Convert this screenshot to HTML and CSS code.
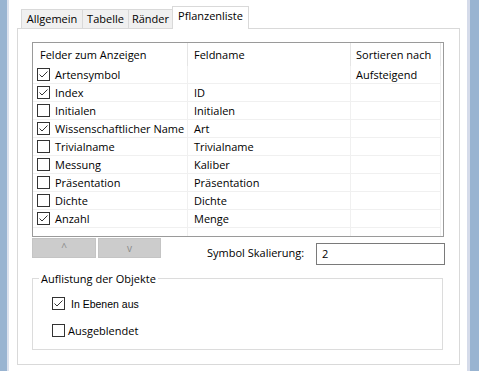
FILE: index.html
```html
<!DOCTYPE html>
<html lang="de">
<head>
<meta charset="utf-8">
<title>Pflanzenliste</title>
<link rel="stylesheet" href="styles.css">
</head>
<body>
<div class="frame">
  <div class="edge-left"></div>
  <div class="dialog">
    <div class="tabs">
      <div class="tab w1">Allgemein</div>
      <div class="tab w2">Tabelle</div>
      <div class="tab w3">Ränder</div>
      <div class="tab w4 active">Pflanzenliste</div>
    </div>
    <div class="panel">
      <div class="listview">
        <div class="lv-head">
          <div class="c1">Felder zum Anzeigen</div>
          <div class="c2">Feldname</div>
          <div class="c3">Sortieren nach</div>
        </div>
        <div class="lv-row">
          <div class="c1"><span class="cb on"><svg viewBox="0 0 11 11" width="11" height="11"><path d="M1.5 5.5 L4 8 L9.5 2.5" /></svg></span>Artensymbol</div>
          <div class="c2"></div>
          <div class="c3">Aufsteigend</div>
        </div>
        <div class="lv-row">
          <div class="c1"><span class="cb on"><svg viewBox="0 0 11 11" width="11" height="11"><path d="M1.5 5.5 L4 8 L9.5 2.5" /></svg></span>Index</div>
          <div class="c2">ID</div>
          <div class="c3"></div>
        </div>
        <div class="lv-row">
          <div class="c1"><span class="cb"></span>Initialen</div>
          <div class="c2">Initialen</div>
          <div class="c3"></div>
        </div>
        <div class="lv-row">
          <div class="c1"><span class="cb on"><svg viewBox="0 0 11 11" width="11" height="11"><path d="M1.5 5.5 L4 8 L9.5 2.5" /></svg></span>Wissenschaftlicher Name</div>
          <div class="c2">Art</div>
          <div class="c3"></div>
        </div>
        <div class="lv-row">
          <div class="c1"><span class="cb"></span>Trivialname</div>
          <div class="c2">Trivialname</div>
          <div class="c3"></div>
        </div>
        <div class="lv-row">
          <div class="c1"><span class="cb"></span>Messung</div>
          <div class="c2">Kaliber</div>
          <div class="c3"></div>
        </div>
        <div class="lv-row">
          <div class="c1"><span class="cb"></span>Präsentation</div>
          <div class="c2">Präsentation</div>
          <div class="c3"></div>
        </div>
        <div class="lv-row">
          <div class="c1"><span class="cb"></span>Dichte</div>
          <div class="c2">Dichte</div>
          <div class="c3"></div>
        </div>
        <div class="lv-row">
          <div class="c1"><span class="cb on"><svg viewBox="0 0 11 11" width="11" height="11"><path d="M1.5 5.5 L4 8 L9.5 2.5" /></svg></span>Anzahl</div>
          <div class="c2">Menge</div>
          <div class="c3"></div>
        </div>
        <div class="lv-fill">
          <div class="c1"></div>
          <div class="c2"></div>
          <div class="c3"></div>
        </div>
      </div>
      <div class="below">
        <div class="btn-row">
          <div class="btn b1">^</div>
          <div class="btn b2">v</div>
        </div>
        <div class="lbl">Symbol Skalierung:</div>
        <div class="input">2</div>
      </div>
      <div class="group">
        <div class="group-title">Auflistung der Objekte</div>
        <div class="opt opt1"><span class="cb on"><svg viewBox="0 0 11 11" width="11" height="11"><path d="M1.5 5.5 L4 8 L9.5 2.5" /></svg></span><span class="arial">In Ebenen aus</span></div>
        <div class="opt opt2"><span class="cb"></span>Ausgeblendet</div>
      </div>
    </div>
  </div>
  <div class="edge-right"></div>
</div>
</body>
</html>
```
FILE: styles.css
```css
* { box-sizing: border-box; }
html, body { margin: 0; padding: 0; }
body {
  width: 479px;
  height: 371px;
  overflow: hidden;
  background: #fff;
  font-family: "Open Sans", "Noto Sans", sans-serif;
  font-size: 11px;
  color: #000;
}
.frame { display: flex; height: 371px; }
.edge-left { width: 9px; background: #99b4d1; border-right: 2px solid #dde2ee; }
.edge-right { width: 12px; background: #99b4d1; border-left: 3px solid #d5dbea; }
.dialog { flex: 1; padding: 0 7px 0 8px; background: #fff; }

.tabs { display: flex; align-items: flex-end; height: 28px; padding-left: 4px; }
.tab {
  height: 19px;
  line-height: 18px;
  text-align: center;
  border: 1px solid #d9d9d9;
  border-bottom: none;
  background: #f0f0f0;
  margin-left: -1px;
  white-space: nowrap;
}
.tab.w1 { width: 62px; margin-left: 0; }
.tab.w2 { width: 47px; }
.tab.w3 { width: 45px; }
.tab.w4 { width: 77px; }
.tab.active {
  height: 23px;
  line-height: 18px;
  background: #fff;
  margin-bottom: -1px;
  position: relative;
  z-index: 1;
}

.panel {
  height: 337px;
  border: 1px solid #d9d9d9;
  padding: 13px 0 0 14px;
}

.listview {
  width: 412px;
  height: 195px;
  border: 1px solid #9a9a9a;
  display: flex;
  flex-direction: column;
}
.lv-head, .lv-row, .lv-fill { display: flex; }
.c1 { width: 155px; }
.c2 { width: 163px; }
.c3 { width: 90px; }
.lv-head { height: 23px; }
.lv-head > div {
  border-right: 1px solid #e5e5e5;
  display: flex;
  align-items: center;
  padding-bottom: 1px;
}
.lv-head .c1 { padding-left: 7px; }
.lv-head .c2 { padding-left: 6px; }
.lv-head .c3 { padding-left: 5px; }
.lv-row { height: 18px; }
.lv-row > div {
  border-right: 1px solid #f0f0f0;
  border-bottom: 1px solid #f0f0f0;
  display: flex;
  align-items: center;
  white-space: nowrap;
}
.lv-row .c1 { padding-left: 4px; }
.lv-row .c2 { padding-left: 6px; }
.lv-row .c3 { padding-left: 5px; }
.lv-fill { flex: 1; }
.lv-fill > div { border-right: 1px solid #f0f0f0; }

.cb {
  width: 13px;
  height: 13px;
  border: 1px solid #333;
  background: #fff;
  flex: none;
  display: inline-flex;
  margin-right: 5px;
}
.cb svg { display: block; }
.cb path { fill: none; stroke: #333; stroke-width: 1; }

.below { display: flex; height: 28px; }
.btn-row { display: flex; gap: 2px; margin-top: 1px; }
.btn {
  height: 20px;
  background: #cccccc;
  border: 1px solid #c4c4c4;
  color: #8a8a8a;
  font-size: 10px;
  text-align: center;
  line-height: 18px;
}
.btn.b1 { width: 64px; line-height: 16px; }
.btn.b2 { width: 63px; }
.lbl { margin-left: 46px; width: 109px; margin-top: 8px; line-height: 16px; }
.input {
  width: 129px;
  height: 22px;
  margin-top: 6px;
  border: 1px solid #7a7a7a;
  padding-left: 5px;
  line-height: 19px;
}

.group {
  margin-top: 13px;
  width: 411px;
  height: 72px;
  border: 1px solid #dcdcdc;
}
.group-title {
  margin-top: -8px;
  margin-left: 6px;
  padding: 0 2px;
  width: fit-content;
  background: #fff;
  line-height: 16px;
}
.opt { display: flex; align-items: center; height: 13px; margin-left: 19px; }
.opt1 { margin-top: 10px; }
.opt2 { margin-top: 14px; }
.opt1 .cb { margin-right: 6px; }
.opt2 .cb { margin-right: 3px; }
.arial { font-family: "Liberation Sans", Arial, sans-serif; font-size: 10.5px; }
```
